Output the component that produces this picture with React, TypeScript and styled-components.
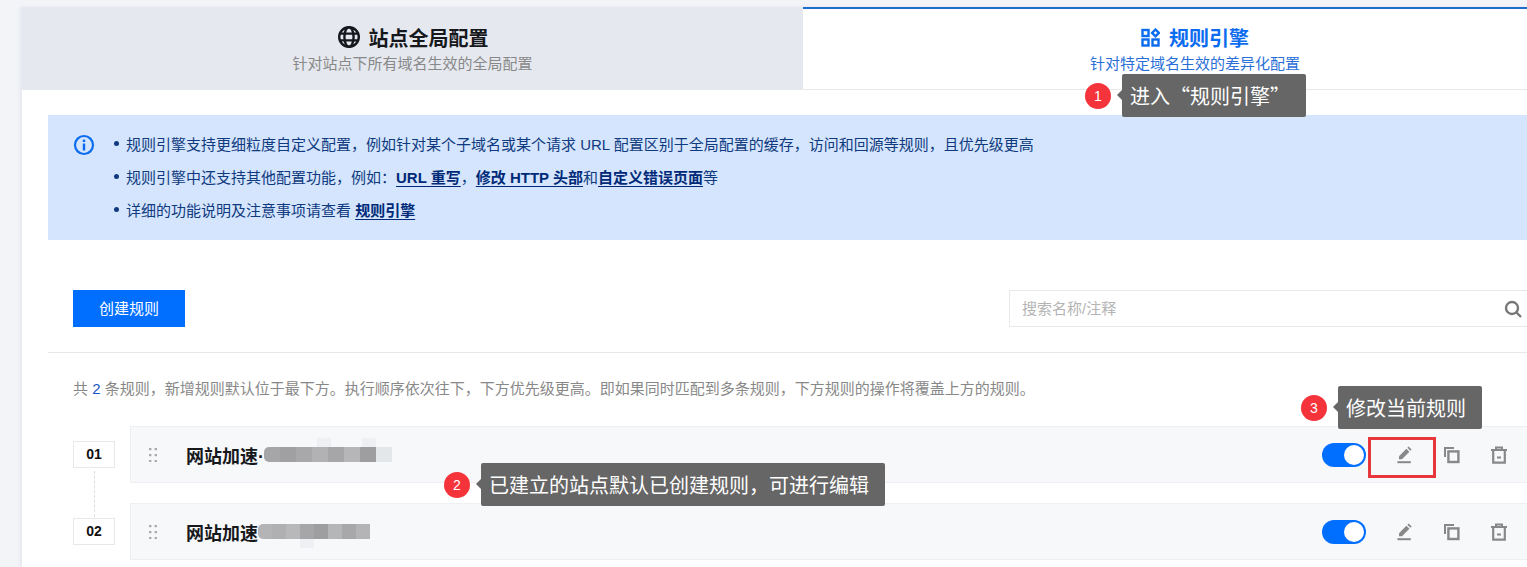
import { FC, ReactNode } from 'react';
import styled, { createGlobalStyle } from 'styled-components';

const GlobalStyle = createGlobalStyle`
  html, body {
    margin: 0;
    height: 100%;
    background: #f3f4f8;
    overflow: hidden;
    font-family: "Liberation Sans", "Noto Sans CJK SC", sans-serif;
  }
`;

const Page = styled.div`
  position: relative;
  width: 1527px;
  height: 567px;
  padding: 7px 0 0 22px;
  box-sizing: border-box;
  overflow: hidden;
`;

const Panel = styled.div`
  background: #fff;
  height: 560px;
  box-shadow: -2px 0 3px rgba(200, 205, 220, 0.3);
`;

const Tabs = styled.div`
  display: grid;
  grid-template-columns: 781px 784px;
  height: 83px;
`;

const Tab = styled.div<{ $active?: boolean }>`
  display: flex;
  flex-direction: column;
  align-items: center;
  box-sizing: border-box;
  padding-top: ${(p) => (p.$active ? '15px' : '17px')};
  background: ${(p) => (p.$active ? '#fff' : '#e5e8ef')};
  border-top: ${(p) => (p.$active ? '2px solid #1c6dcc' : '0')};
  border-bottom: ${(p) => (p.$active ? '1px solid #e8e8e8' : '0')};
`;

const TabTitle = styled.div<{ $active?: boolean }>`
  display: flex;
  align-items: center;
  gap: 9px;
  height: 26px;
  margin-left: ${(p) => (p.$active ? '0' : '1px')};
  font-size: 20px;
  font-weight: 700;
  color: ${(p) => (p.$active ? '#0b6cf0' : '#16181c')};
`;

const TabHint = styled.div<{ $active?: boolean }>`
  margin-top: 4px;
  font-size: 15px;
  line-height: 20px;
  color: ${(p) => (p.$active ? '#2a6fd8' : '#888')};
`;

const Content = styled.div`
  padding: 25px 0 0 26px;
`;

const Alert = styled.div`
  display: flex;
  height: 125px;
  box-sizing: border-box;
  padding: 13px 0 0 25px;
  gap: 19px;
  background: #d4e5fd;
  color: #0f3a80;
`;

const AlertIcon = styled.svg`
  flex: none;
  width: 22px;
  height: 22px;
  margin-top: 6px;
`;

const AlertList = styled.ul`
  margin: 0;
  padding: 0;
  list-style: none;
`;

const AlertItem = styled.li`
  position: relative;
  padding-left: 12px;
  font-size: 15px;
  line-height: 33px;

  &::before {
    content: '';
    position: absolute;
    left: 0;
    top: 13px;
    width: 5px;
    height: 5px;
    border-radius: 50%;
    background: #0f3a80;
  }
`;

const AlertLink = styled.a`
  color: #002a78;
  font-weight: 700;
  text-decoration: underline;
  text-underline-offset: 3px;
`;

const Toolbar = styled.div`
  display: flex;
  align-items: center;
  justify-content: space-between;
  margin-top: 50px;
  padding: 0 0 25px 25px;
  border-bottom: 1px solid #e8e8e8;
`;

const PrimaryButton = styled.button`
  width: 112px;
  height: 37px;
  border: 0;
  padding: 0 0 3px;
  background: #006eff;
  color: #fff;
  font: inherit;
  font-size: 15px;
`;

const Search = styled.div`
  display: flex;
  align-items: center;
  justify-content: space-between;
  box-sizing: border-box;
  width: 518px;
  height: 37px;
  padding: 0 5px 0 12px;
  border: 1px solid #e8e8e8;
  border-right: 0;
  font-size: 15px;
  color: #b4b4b4;
`;

const SearchHint = styled.span`
  margin-top: -3px;
`;

const Summary = styled.p`
  margin: 0;
  padding: 26px 0 0 25px;
  font-size: 15px;
  line-height: 20px;
  color: #888;
`;

const SummaryCount = styled.span`
  color: #1a56c4;
`;

const RuleList = styled.div`
  display: flex;
  flex-direction: column;
  gap: 20px;
  margin-top: 27px;
  padding-left: 25px;
`;

const RuleRow = styled.div`
  display: flex;
  align-items: center;
  gap: 15px;
`;

const RuleIndex = styled.div<{ $linked?: boolean }>`
  position: relative;
  flex: none;
  width: 42px;
  height: 27px;
  box-sizing: border-box;
  border: 1px solid #e8e8e8;
  background: #fff;
  text-align: center;
  font-size: 14px;
  font-weight: 700;
  line-height: 25px;
  color: #111;

  &::after {
    content: '';
    display: ${(p) => (p.$linked ? 'block' : 'none')};
    position: absolute;
    left: 20px;
    top: 29px;
    height: 46px;
    border-left: 1px dashed #ddd;
  }
`;

const RuleCard = styled.div`
  flex: 1;
  display: flex;
  align-items: center;
  box-sizing: border-box;
  height: 57px;
  padding-left: 18px;
  border: 1px solid #eeeff2;
  border-right: 0;
  background: #f7f8fa;
`;

const Grip = styled.svg`
  flex: none;
  width: 8px;
  height: 14px;
  margin-right: 29px;
`;

const RuleName = styled.div`
  display: flex;
  align-items: center;
  font-size: 18px;
  font-weight: 700;
  color: #16181c;
`;

const Mosaic = styled.div`
  position: relative;
  display: flex;
  height: 15px;
`;

const MosaicCell = styled.div<{ $shade: string; $width: number }>`
  width: ${(p) => p.$width}px;
  background: ${(p) => p.$shade};

  &:first-child {
    border-radius: 5px 0 0 5px;
  }

  &:last-of-type {
    border-radius: 0 5px 5px 0;
  }
`;

/* faint block left over from the mosaic, it sticks out above or below the bar */
const MosaicSmudge = styled.div<{ $left: number; $top: number }>`
  position: absolute;
  left: ${(p) => p.$left}px;
  top: ${(p) => p.$top}px;
  width: 14px;
  height: 9px;
  background: #eff0f3;
`;

const RuleActions = styled.div`
  display: flex;
  align-items: center;
  margin-left: auto;
  padding-right: 19px;
`;

const Toggle = styled.div`
  position: relative;
  width: 44px;
  height: 24px;
  margin-right: 30px;
  border-radius: 12px;
  background: #006eff;

  &::after {
    content: '';
    position: absolute;
    right: 2px;
    top: 2px;
    width: 20px;
    height: 20px;
    border-radius: 50%;
    background: #fff;
  }
`;

const ActionIcon = styled.svg`
  width: 18px;
  height: 18px;
  margin-left: 29px;
  fill: none;
  stroke: #888;
  stroke-width: 2;

  &:first-of-type {
    margin-left: 0;
  }
`;

const Highlight = styled.div`
  position: absolute;
  left: 1368px;
  top: 437px;
  width: 68px;
  height: 41px;
  box-sizing: border-box;
  border: 3px solid #e8373c;
`;

const Callout = styled.div<{ $left: number; $top: number }>`
  position: absolute;
  left: ${(p) => p.$left}px;
  top: ${(p) => p.$top}px;
  display: flex;
  align-items: center;
  gap: 11px;
`;

const Badge = styled.div`
  width: 26px;
  height: 26px;
  border-radius: 50%;
  background: #f5333a;
  color: #fff;
  font-size: 14px;
  line-height: 26px;
  text-align: center;
`;

const Bubble = styled.div`
  position: relative;
  height: 43px;
  padding: 0 16px 0 8px;
  border-radius: 2px;
  background: #666;
  color: #fff;
  font-family: "Noto Sans CJK SC", sans-serif;
  font-size: 20px;
  line-height: 43px;
  white-space: nowrap;

  &::before {
    content: '';
    position: absolute;
    left: -5px;
    top: 16px;
    border-style: solid;
    border-width: 5px 5px 5px 0;
    border-color: transparent #666 transparent transparent;
  }
`;

const GlobeIcon = () => (
  <svg width="22" height="22" viewBox="0 0 22 22" fill="none" stroke="#16181c" strokeWidth="2.4">
    <circle cx="11" cy="11" r="9.8" />
    <ellipse cx="11" cy="11" rx="4.6" ry="9.8" />
    <path d="M1.5 7.6h19M1.5 14.4h19" />
  </svg>
);

const RuleEngineIcon = () => (
  <svg width="19" height="19" viewBox="0 0 19 19" fill="none" stroke="#0b6cf0" strokeWidth="2.4">
    <rect x="1.5" y="2" width="6" height="6" />
    <rect x="1.5" y="11.5" width="6" height="6" />
    <rect x="11.5" y="11.5" width="6" height="6" />
    <path d="M14.5 1.5l3.4 3.4-3.4 3.4-3.4-3.4z" />
  </svg>
);

const EditIcon = () => (
  <ActionIcon viewBox="0 0 18 18">
    <path d="M1.4 16.2h13.4" />
    <path d="M3 13.2v-3L10.4 2.8l3 3-7.4 7.4z" fill="#888" stroke="none" />
    <path d="M11.4 1.8l1.2-1.2 3 3-1.2 1.2z" fill="#888" stroke="none" />
  </ActionIcon>
);

const CopyIcon = () => (
  <ActionIcon viewBox="0 0 18 18">
    <path d="M2 11V2h9" />
    <rect x="5.4" y="5.4" width="10" height="10.6" strokeWidth="2.4" />
  </ActionIcon>
);

const TrashIcon = () => (
  <ActionIcon viewBox="0 0 18 18">
    <path d="M1 4h16M6 4V1.6h6V4" />
    <path d="M3.2 4v12.6h11.6V4" strokeWidth="2.2" />
    <path d="M7 11.5h4" />
  </ActionIcon>
);

const Rule: FC<{
  index: string;
  linked?: boolean;
  name: string;
  cells: string[];
  cellWidth: number;
  smudges: [number, number][];
}> = ({ index, linked, name, cells, cellWidth, smudges }) => (
  <RuleRow>
    <RuleIndex $linked={linked}>{index}</RuleIndex>
    <RuleCard>
      <Grip viewBox="0 0 8 14" fill="#aaa">
        {[1, 7, 13].map((y) => (
          <g key={y}>
            <rect x="0" y={y - 1} width="2.4" height="2.2" />
            <rect x="5.6" y={y - 1} width="2.4" height="2.2" />
          </g>
        ))}
      </Grip>
      <RuleName>
        {name}
        <Mosaic>
          {cells.map((shade, i) => (
            <MosaicCell key={i} $shade={shade} $width={cellWidth} />
          ))}
          {smudges.map(([left, top]) => (
            <MosaicSmudge key={left} $left={left} $top={top} />
          ))}
        </Mosaic>
      </RuleName>
      <RuleActions>
        <Toggle />
        <EditIcon />
        <CopyIcon />
        <TrashIcon />
      </RuleActions>
    </RuleCard>
  </RuleRow>
);

const Note: FC<{ left: number; top: number; n: number; children: ReactNode }> = ({
  left,
  top,
  n,
  children,
}) => (
  <Callout $left={left} $top={top}>
    <Badge>{n}</Badge>
    <Bubble>{children}</Bubble>
  </Callout>
);

export default function App() {
  return (
    <Page>
      <GlobalStyle />
      <Panel>
        <Tabs>
          <Tab>
            <TabTitle>
              <GlobeIcon />
              站点全局配置
            </TabTitle>
            <TabHint>针对站点下所有域名生效的全局配置</TabHint>
          </Tab>
          <Tab $active>
            <TabTitle $active>
              <RuleEngineIcon />
              规则引擎
            </TabTitle>
            <TabHint $active>针对特定域名生效的差异化配置</TabHint>
          </Tab>
        </Tabs>
        <Content>
          <Alert>
            <AlertIcon viewBox="0 0 22 22" fill="none">
              <circle cx="11" cy="11" r="9" stroke="#0b6cf0" strokeWidth="2.2" />
              <rect x="9.8" y="9.5" width="2.4" height="7" fill="#0b6cf0" />
              <rect x="9.8" y="5.6" width="2.4" height="2.4" fill="#0b6cf0" />
            </AlertIcon>
            <AlertList>
              <AlertItem>
                规则引擎支持更细粒度自定义配置，例如针对某个子域名或某个请求 URL
                配置区别于全局配置的缓存，访问和回源等规则，且优先级更高
              </AlertItem>
              <AlertItem>
                规则引擎中还支持其他配置功能，例如：<AlertLink>URL 重写</AlertLink>，
                <AlertLink>修改 HTTP 头部</AlertLink>和<AlertLink>自定义错误页面</AlertLink>等
              </AlertItem>
              <AlertItem>
                详细的功能说明及注意事项请查看 <AlertLink>规则引擎</AlertLink>
              </AlertItem>
            </AlertList>
          </Alert>
          <Toolbar>
            <PrimaryButton>创建规则</PrimaryButton>
            <Search>
              <SearchHint>搜索名称/注释</SearchHint>
              <svg width="18" height="18" viewBox="0 0 18 18" fill="none" stroke="#777" strokeWidth="2.4">
                <circle cx="8" cy="8" r="6" />
                <path d="M12.5 12.5l4.5 4.5" />
              </svg>
            </Search>
          </Toolbar>
          <Summary>
            共 <SummaryCount>2</SummaryCount>{' '}
            条规则，新增规则默认位于最下方。执行顺序依次往下，下方优先级更高。即如果同时匹配到多条规则，下方规则的操作将覆盖上方的规则。
          </Summary>
          <RuleList>
            <Rule
              index="01"
              linked
              name="网站加速·"
              cellWidth={16}
              cells={['#a6a6a8', '#a0a0a2', '#a8a8aa', '#b2b2b4', '#a6a6a8', '#b6b6b8', '#9e9ea0', '#e4e7ea']}
              smudges={[
                [53, -9],
                [98, -9],
              ]}
            />
            <Rule
              index="02"
              name="网站加速"
              cellWidth={14}
              cells={['#b4b4b6', '#b0b0b2', '#b8b8ba', '#a6a6a8', '#9e9ea0', '#b4b6b8', '#a8a8aa', '#b4b4b6']}
              smudges={[[42, 15]]}
            />
          </RuleList>
        </Content>
      </Panel>
      <Highlight />
      <Note left={1085} top={74} n={1}>
        进入“规则引擎”
      </Note>
      <Note left={444} top={463} n={2}>
        已建立的站点默认已创建规则，可进行编辑
      </Note>
      <Note left={1301} top={386} n={3}>
        修改当前规则
      </Note>
    </Page>
  );
}
